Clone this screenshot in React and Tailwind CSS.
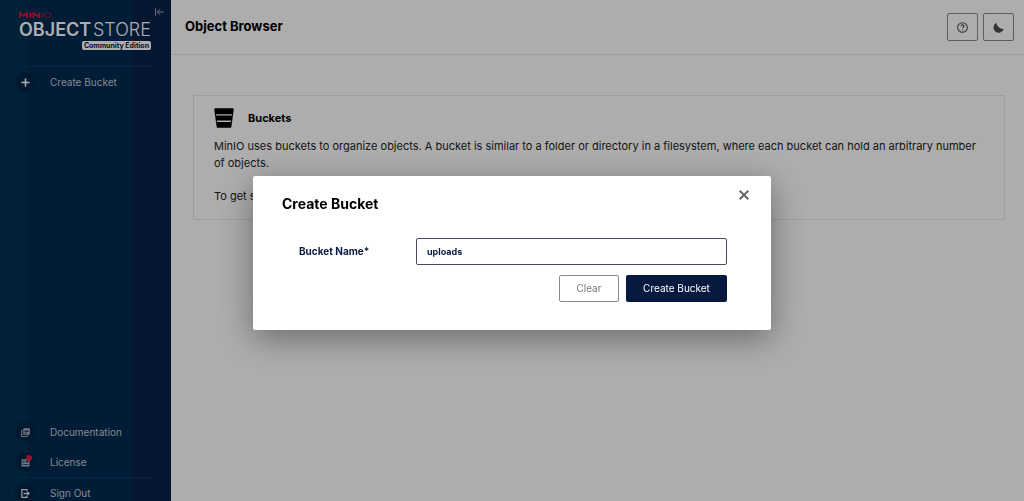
import { useState } from 'react';

const BucketIcon = ({ className }) => (
  <svg viewBox="0 0 20 20" className={className} aria-hidden="true">
    <path
      fill="currentColor"
      fillRule="evenodd"
      d="M1.4.3h17.2c.7 0 1.2.5 1.1 1.2l-2.3 17.2c-.1.6-.6 1-1.2 1H3.8c-.6 0-1.1-.4-1.2-1L.3 1.5C.2.8.7.3 1.4.3ZM2 6.3l.2 1.3h15.6l.2-1.3H2Zm.9 6.3.2 1.3h13.8l.2-1.3H2.9Z"
    />
  </svg>
);

const HelpIcon = () => (
  <svg viewBox="0 0 12 12" className="h-[11px] w-[11px]" fill="none" stroke="currentColor" aria-hidden="true">
    <circle cx="6" cy="6" r="5.3" strokeWidth="1.1" />
    <path d="M4.4 4.7c0-1 .7-1.6 1.6-1.6s1.6.6 1.6 1.5c0 1.2-1.5 1.1-1.5 2.3" strokeWidth="1.2" />
    <circle cx="6.1" cy="8.6" r=".7" fill="currentColor" stroke="none" />
  </svg>
);

const MoonIcon = () => (
  <svg viewBox="0 0 12 12" className="h-[11px] w-[11px]" fill="currentColor" aria-hidden="true">
    <path d="M3.6.9A5.7 5.7 0 1 0 11.7 7.6C8.6 8.2 4.2 5.2 3.6.9Z" />
  </svg>
);

const CollapseIcon = () => (
  <svg viewBox="0 0 9 8" className="h-2 w-[9px]" fill="none" stroke="currentColor" aria-hidden="true">
    <path d="M.6.3v7.4M8.7 4H2.4M5 1.3 2.3 4 5 6.7" />
  </svg>
);

const PlusIcon = () => (
  <svg viewBox="0 0 10 10" className="h-[9px] w-[9px]" stroke="#fff" strokeWidth="1.8" aria-hidden="true">
    <path d="M5 .5v9M.5 5h9" />
  </svg>
);

const DocumentIcon = () => (
  <svg viewBox="0 0 10 10" className="h-[9px] w-[9px]" aria-hidden="true">
    <path d="M2 2.6H.7v6.8h6.6V8.2" fill="none" stroke="currentColor" strokeWidth="1.1" />
    <path
      fill="currentColor"
      fillRule="evenodd"
      d="M2.6.3h7.1v7.3H2.6V.3Zm1.2 1.8v.8h4.7v-.8H3.8Zm0 1.6v.8h4.7v-.8H3.8Zm0 1.6v.8h2.8v-.8H3.8Z"
    />
  </svg>
);

const LicenseIcon = () => (
  <svg viewBox="0 0 10 10" className="h-[9px] w-[9px]" aria-hidden="true">
    <path
      fill="currentColor"
      fillRule="evenodd"
      d="M.6 1.5h8.8v8H.6v-8Zm1.1 1.4v.8h2.6v-.8H1.7Zm0 1.8v.8h2.6v-.8H1.7Zm0 2v.8h6.6v-.8H1.7Zm4-3.8v2.2h2.4V2.9H5.7Z"
    />
  </svg>
);

const SignOutIcon = () => (
  <svg viewBox="0 0 10 10" className="h-[9px] w-[9px]" fill="none" stroke="#e3e7ec" strokeWidth="1.4" aria-hidden="true">
    <path d="M6.6 2.6V.8H1v8.4h5.6V7.4M3 5h5.6M7.1 3.2 9 5 7.1 6.8" />
  </svg>
);

const CloseIcon = () => (
  <svg viewBox="0 0 10 10" className="h-[10px] w-[10px]" stroke="currentColor" strokeWidth="2" aria-hidden="true">
    <path d="m.7.7 8.6 8.6M9.3.7.7 9.3" />
  </svg>
);

const MinioMark = () => (
  <svg viewBox="0 0 32 6" className="h-[6px] w-8" fill="none" stroke="#e0173f" aria-label="MinIO" role="img">
    <path d="M1 6V1l3.5 3L8 1v5M11.2.5V6M14.4 6V1l6 4.2V.5" strokeWidth="1.7" />
    <path d="M23.3.5V6" strokeWidth=".8" />
    <rect x="25.4" y=".8" width="6.2" height="4.6" rx="2.2" strokeWidth=".8" />
  </svg>
);

const Logo = () => (
  <div className="flex w-[132px] flex-col">
    <MinioMark />
    <div className="flex items-center justify-between text-[18px] leading-6 text-white">
      <span className="font-semibold">OBJECT</span>
      <span className="font-light">STORE</span>
    </div>
    <span className="-mt-px self-end rounded-xs bg-white px-0.5 text-[7px] leading-[9px] font-bold text-[#07162f]">
      Community Edition
    </span>
  </div>
);

const MenuItem = ({ icon, label, badge }) => (
  <a href="#" className="flex h-[30px] items-center gap-[15px] text-[10px] text-[#c3cad6]">
    <span className="relative flex h-5 w-5 items-center justify-center rounded-full bg-[#002548] text-[#a9b3c1]">
      {icon}
      {badge && <span className="absolute top-[3px] right-[3px] h-1.5 w-1.5 rounded-full bg-[#e51b3f]" />}
    </span>
    {label}
  </a>
);

const Sidebar = () => (
  <aside className="flex w-[171px] shrink-0 flex-col bg-[linear-gradient(90deg,#003150_28px,#002a50_28px,#002a50_133px,#0a2047_133px)]">
    <div className="flex items-start justify-between pt-3 pr-[7px] pl-[19px]">
      <Logo />
      <button type="button" aria-label="Collapse menu" className="-mt-1 text-[#9fabba]">
        <CollapseIcon />
      </button>
    </div>
    <nav className="flex flex-1 flex-col justify-between pl-[15px]">
      <div className="mt-4">
        <hr className="mr-5 ml-1 border-[#063a66]" />
        <MenuItem icon={<PlusIcon />} label="Create Bucket" />
      </div>
      <div className="-mb-[7px]">
        <MenuItem icon={<DocumentIcon />} label="Documentation" />
        <MenuItem icon={<LicenseIcon />} label="License" badge />
        <hr className="mr-[18px] border-[#063a66]" />
        <MenuItem icon={<SignOutIcon />} label="Sign Out" />
      </div>
    </nav>
  </aside>
);

const HeaderButton = ({ label, children }) => (
  <button
    type="button"
    aria-label={label}
    className="flex h-7 w-[31px] items-center justify-center rounded-xs border border-[#8a8a8a] text-[#4a4a4a]"
  >
    {children}
  </button>
);

const CreateBucketModal = () => {
  const [name, setName] = useState('uploads');

  return (
    <div className="fixed inset-0 flex items-center justify-center bg-black/32">
      <form
        role="dialog"
        aria-labelledby="modal-title"
        onSubmit={(e) => e.preventDefault()}
        className="mb-[-5px] w-[518px] rounded-xs bg-white pt-3 pb-7 shadow-[0_8px_34px_rgba(0,0,0,0.4)]"
      >
        <div className="flex items-start justify-between pr-[22px] pl-[29px]">
          <h2 id="modal-title" className="pt-1.5 text-sm leading-5 font-bold text-black">
            Create Bucket
          </h2>
          <button type="button" aria-label="Close" className="pt-0.5 text-[#666]">
            <CloseIcon />
          </button>
        </div>
        <div className="mt-6 pr-11 pl-[46px]">
          <div className="flex items-center">
            <label htmlFor="bucket-name" className="w-[117px] text-[10px] font-bold text-[#07193e]">
              Bucket Name*
            </label>
            <input
              id="bucket-name"
              value={name}
              onChange={(e) => setName(e.target.value)}
              className="h-[27px] min-w-0 flex-1 rounded-xs border border-[#474b5c] px-2.5 text-[9px] font-bold text-[#07193e] outline-none"
            />
          </div>
          <div className="mt-2.5 flex justify-end gap-[7px] text-[10px]">
            <button
              type="button"
              onClick={() => setName('')}
              className="h-[27px] w-[60px] rounded-xs border border-[#8a8a8a] text-[#777]"
            >
              Clear
            </button>
            <button type="submit" className="h-[27px] w-[101px] rounded-xs bg-[#07193e] text-white">
              Create Bucket
            </button>
          </div>
        </div>
      </form>
    </div>
  );
};

const App = () => (
  <div className="flex min-h-screen bg-white font-['Inter',sans-serif]">
    <Sidebar />
    <main className="min-w-0 flex-1">
      <header className="flex h-[55px] items-center justify-between border-b border-[#e8e8e8] pr-2.5 pl-3.5">
        <h1 className="text-[13px] font-bold text-black">Object Browser</h1>
        <div className="flex gap-[5px]">
          <HeaderButton label="Help">
            <HelpIcon />
          </HeaderButton>
          <HeaderButton label="Dark mode">
            <MoonIcon />
          </HeaderButton>
        </div>
      </header>
      <section className="mt-10 mr-[19px] ml-[22px] border border-[#e8e8e8] px-5 pt-3 pb-3.5 text-[11px] text-[#222]">
        <div className="flex items-center gap-3.5">
          <BucketIcon className="h-5 w-5 text-black" />
          <h2 className="font-bold text-black">Buckets</h2>
        </div>
        <p className="mt-2.5 leading-[17px]">
          MinIO uses buckets to organize objects. A bucket is similar to a folder or directory in a filesystem, where
          each bucket can hold an arbitrary number of objects.
        </p>
        <p className="mt-4 leading-[17px]">
          To get started,{' '}
          <a href="#" className="text-[#2781b0]">
            Create a Bucket.
          </a>
        </p>
      </section>
    </main>
    <CreateBucketModal />
  </div>
);

export default App;
